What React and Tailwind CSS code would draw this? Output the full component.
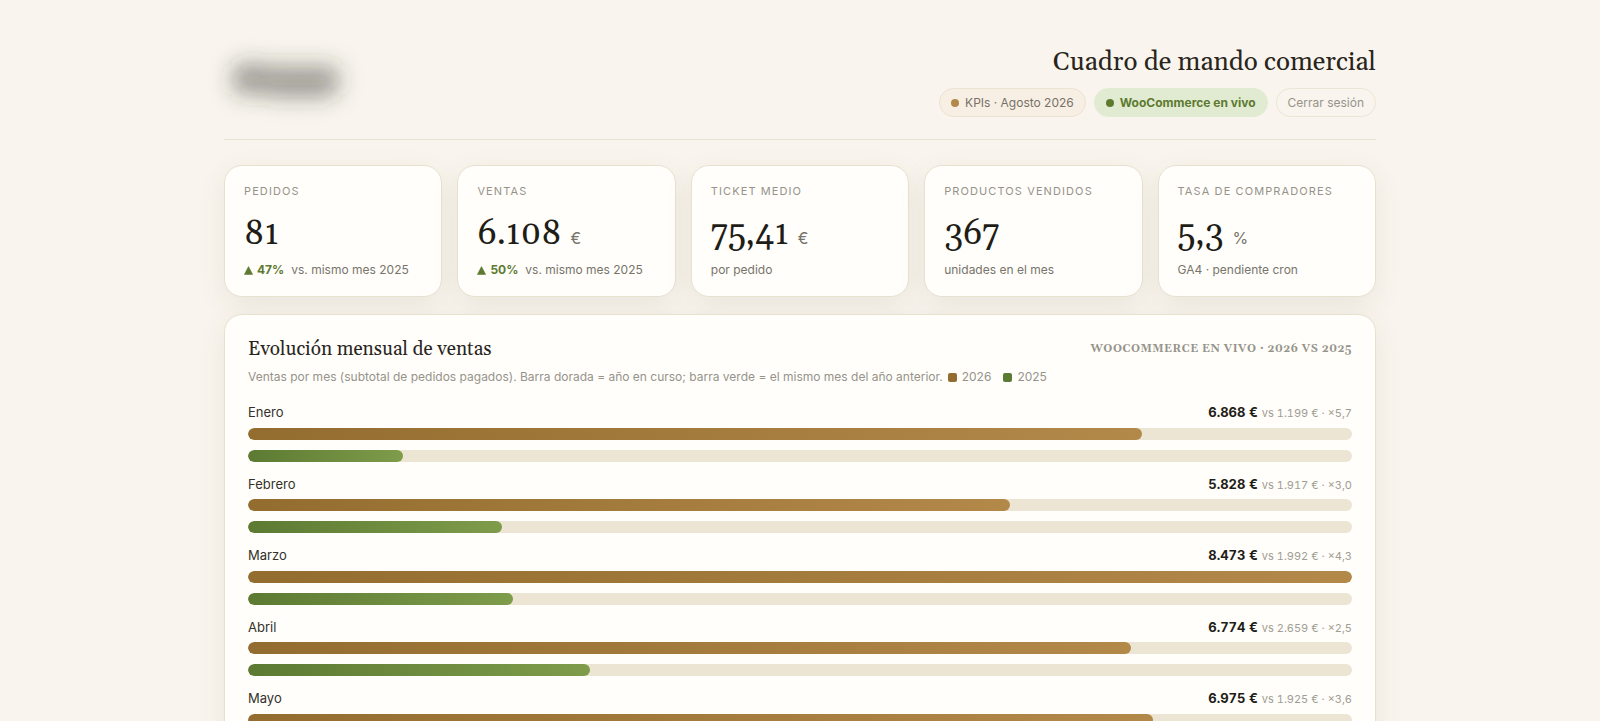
const kpis = [
  { label: 'Pedidos', value: '81', delta: '47%', note: 'vs. mismo mes 2025' },
  { label: 'Ventas', value: '6.108', unit: '€', delta: '50%', note: 'vs. mismo mes 2025' },
  { label: 'Ticket medio', value: '75,41', unit: '€', note: 'por pedido' },
  { label: 'Productos vendidos', value: '367', note: 'unidades en el mes' },
  { label: 'Tasa de compradores', value: '5,3', unit: '%', note: 'GA4 · pendiente cron' },
];

const months = [
  { name: 'Enero', current: 6868, previous: 1199, ratio: '5,7' },
  { name: 'Febrero', current: 5828, previous: 1917, ratio: '3,0' },
  { name: 'Marzo', current: 8473, previous: 1992, ratio: '4,3' },
  { name: 'Abril', current: 6774, previous: 2659, ratio: '2,5' },
  { name: 'Mayo', current: 6975, previous: 1925, ratio: '3,6' },
];

const maxSales = Math.max(...months.map((m) => m.current));
const percent = (n) => `${Math.round((n / maxSales) * 100)}%`;
const thousands = (n) => String(n).replace(/(\d)(\d{3})$/, '$1.$2');

function Logo() {
  return (
    <svg className="h-[70px] w-[140px] overflow-visible" viewBox="0 0 140 70" role="img" aria-label="Logotipo">
      <defs>
        <filter id="soft" x="-50%" y="-120%" width="200%" height="340%">
          <feGaussianBlur stdDeviation="11" />
        </filter>
      </defs>
      <g filter="url(#soft)" fill="#2c2c2a" fillOpacity="0.4">
        <rect x="8" y="19" width="108" height="30" rx="10" />
        <rect x="10" y="14" width="30" height="24" rx="10" fillOpacity="0.12" />
        <rect x="44" y="34" width="64" height="22" rx="10" fillOpacity="0.12" />
      </g>
    </svg>
  );
}

function KpiCard({ label, value, unit, delta, note }) {
  return (
    <article className="rounded-[18px] border border-[#e8e1d0] bg-[#fffefa] px-[19px] pt-4 pb-4 shadow-[0_8px_28px_rgba(90,75,30,0.09)]">
      <h2 className="text-[11px] leading-[18px] tracking-[0.1em] text-[#96938a] uppercase">{label}</h2>
      <p className="mt-3 flex items-baseline gap-[9px] leading-[44px]">
        <span className="font-[Georgia,Gelasio,'Liberation_Serif',serif] text-[34px] text-[#1f1d18]">{value}</span>
        {unit && <span className="text-base text-[#77746b]">{unit}</span>}
      </p>
      <p className="mt-1 flex items-center gap-[7px] text-xs leading-5 text-[#77746b]">
        {delta && (
          <span className="flex items-center gap-1 font-bold text-[#5d7a30]">
            <svg className="size-[9px]" viewBox="0 0 9 9" aria-hidden="true">
              <path d="M4.5 0.6 8.6 8.4H0.4Z" fill="currentColor" stroke="currentColor" strokeWidth="0.6" strokeLinejoin="round" />
            </svg>
            {delta}
          </span>
        )}
        <span>{note}</span>
      </p>
    </article>
  );
}

function MonthRow({ name, current, previous, ratio }) {
  return (
    <li>
      <div className="flex items-baseline justify-between text-[13px] leading-normal text-[#33312b]">
        <span>{name}</span>
        <span className="flex items-baseline gap-1 tabular-nums">
          <strong className="font-bold text-[#1f1d18]">{thousands(current)} €</strong>
          <span className="text-[11px] text-[#a09d94]">vs {thousands(previous)} € · ×{ratio}</span>
        </span>
      </div>
      <div className="mt-[5px] h-3 overflow-hidden rounded-full bg-[#ece5d3]">
        <div className="h-full rounded-full bg-linear-to-r from-[#936d2f] to-[#b3894a]" style={{ width: percent(current) }} />
      </div>
      <div className="mt-[10px] h-3 overflow-hidden rounded-full bg-[#ece5d3]">
        <div className="h-full rounded-full bg-linear-to-r from-[#5d7a33] to-[#7e9c4a]" style={{ width: percent(previous) }} />
      </div>
    </li>
  );
}

export default function App() {
  return (
    <div className="min-h-screen bg-[#f9f5ee] px-6 pt-[46px] pb-10 font-[Inter,'Liberation_Sans',sans-serif]">
      <div className="mx-auto max-w-[1152px]">
        <header className="flex items-start justify-between border-b border-[#e8e2d0] pb-[22px]">
          <Logo />
          <div className="flex flex-col items-end gap-2">
            <h1 className="font-[Georgia,Gelasio,'Liberation_Serif',serif] text-[26px] leading-[34px] text-[#29251c]">Cuadro de mando comercial</h1>
            <div className="flex items-center gap-2 text-xs leading-[19px]">
              <span className="flex items-center gap-[6px] rounded-full border border-[#ece2d2] bg-[#f7efe3] px-[11px] py-1 text-[#77716a]">
                <span className="size-2 rounded-full bg-[#b3894a]" />
                KPIs · Agosto 2026
              </span>
              <span className="flex items-center gap-[6px] rounded-full border border-[#e1ebd2] bg-[#e1ebd2] px-[11px] py-1 font-bold text-[#5d7a30]">
                <span className="size-2 rounded-full bg-[#5d7a30]" />
                WooCommerce en vivo
              </span>
              <button type="button" className="rounded-full border border-[#ebe5d5] px-[11px] py-1 text-[#96938a]">Cerrar sesión</button>
            </div>
          </div>
        </header>

        <main>
          <section className="mt-[25px] grid grid-cols-5 gap-[15px]" aria-label="Indicadores">
            {kpis.map((kpi) => (
              <KpiCard key={kpi.label} {...kpi} />
            ))}
          </section>

          <section className="relative mt-[17px] rounded-[18px] border border-[#e8e1d0] bg-[#fffefa] px-[23px] pt-5 pb-6 shadow-[0_8px_28px_rgba(90,75,30,0.09)]">
            <div className="flex items-center justify-between font-[Georgia,Gelasio,'Liberation_Serif',serif]">
              <h2 className="text-[19px] leading-7 text-[#29261f]">Evolución mensual de ventas</h2>
              <span className="text-[11px] font-bold tracking-[0.05em] text-[#96938a] uppercase">WooCommerce en vivo · 2026 vs 2025</span>
            </div>
            <p className="mt-1 flex items-center text-xs leading-5 text-[#96938a]">
              Ventas por mes (subtotal de pedidos pagados). Barra dorada = año en curso; barra verde = el mismo mes del año anterior.
              <span className="ml-[5px] flex items-center gap-[5px]">
                <span className="size-[9px] rounded-xs bg-[#936d2f]" />
                2026
              </span>
              <span className="ml-3 flex items-center gap-[5px]">
                <span className="size-[9px] rounded-xs bg-[#5d7a33]" />
                2025
              </span>
            </p>
            <ul className="mt-4 flex flex-col gap-[13px]">
              {months.map((month) => (
                <MonthRow key={month.name} {...month} />
              ))}
            </ul>
          </section>
        </main>
      </div>
    </div>
  );
}
